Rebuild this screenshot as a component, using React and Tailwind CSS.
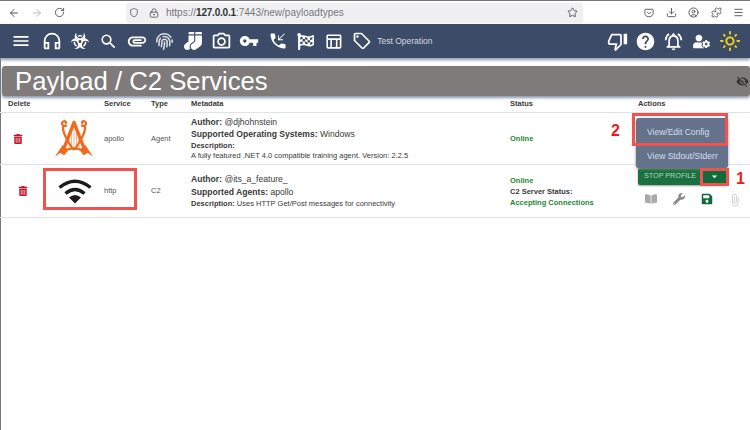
import React from 'react';
import { ArrowLeft, ArrowRight, RotateCw, Shield, LockKeyhole, Star, Download, CircleUser, Puzzle, Menu } from 'lucide-react';
import { FaBiohazard, FaFingerprint, FaSocks, FaFlagCheckered, FaUserCog, FaTrashAlt, FaWrench, FaSave, FaBookOpen } from 'react-icons/fa';
import {
  MdMenu, MdOutlineHeadphones, MdSearch, MdAttachment, MdOutlinePhotoCamera, MdVpnKey, MdPhoneCallback, MdOutlineTableChart,
  MdOutlineLocalOffer, MdOutlineThumbDown, MdHelp, MdOutlineNotificationsActive, MdOutlineLightMode, MdVisibilityOff,
  MdArrowDropDown, MdAttachFile,
} from 'react-icons/md';

const navIcons = [
  { icon: MdOutlineHeadphones, size: 'text-[22px]' },
  { icon: FaBiohazard, size: 'text-[18px]' },
  { icon: MdSearch, size: 'text-[19px]' },
  { icon: MdAttachment, size: 'text-[22px]' },
  { icon: FaFingerprint, size: 'text-[17px] opacity-80' },
  { icon: FaSocks, size: 'text-[18px]' },
  { icon: MdOutlinePhotoCamera, size: 'text-[21px]' },
  { icon: MdVpnKey, size: 'text-[20px]' },
  { icon: MdPhoneCallback, size: 'text-[20px]' },
  { icon: FaFlagCheckered, size: 'text-[17px]' },
  { icon: MdOutlineTableChart, size: 'text-[19px]' },
  { icon: MdOutlineLocalOffer, size: 'text-[20px]' },
];

const NavCell = ({ children, className }) => (
  <div className={`w-[28.2px] flex justify-center items-center text-white ${className || ''}`}>{children}</div>
);

const ApolloLogo = () => (
  <svg viewBox="0 0 38 40" className="w-[38px] h-[39px]" fill="none" stroke="#ee6a1e" strokeLinecap="round" strokeLinejoin="round">
    <path d="M14 15v14M16.5 11v19M19 8v21M21.5 11v19M24 15v14" stroke="#f4b48a" strokeWidth="1" />
    <path d="M19 3.5 L9.5 28 M19 3.5 L28.5 28" strokeWidth="3.4" />
    <path d="M11 7 C7 8 5 4 8 2.5 C10 1.5 11.5 3 10.5 4.5 M8 7 C6 13 13 23 18 31" strokeWidth="2.2" />
    <path d="M27 7 C31 8 33 4 30 2.5 C28 1.5 26.5 3 27.5 4.5 M30 7 C32 13 25 23 20 31" strokeWidth="2.2" />
    <path d="M8 34 Q19 26 30 34" strokeWidth="2.2" />
    <path d="M0.5 37.5 L7.5 27 L13 31.5 L9 37 L5 34.5 Z" fill="#ee6a1e" strokeWidth="0.6" />
    <path d="M37.5 37.5 L30.5 27 L25 31.5 L29 37 L33 34.5 Z" fill="#ee6a1e" strokeWidth="0.6" />
  </svg>
);

const WifiLogo = () => (
  <svg viewBox="0 0 34 26" className="w-[34px] h-[26px]" fill="none" stroke="#1b1b1b" strokeWidth="3.4">
    <path d="M1.5 9.5 Q17 -3 32.5 9.5" />
    <path d="M7.5 15.5 Q17 7.5 26.5 15.5" />
    <path d="M17 25.5 L11 19.5 Q17 14.5 23 19.5 Z" fill="#1b1b1b" stroke="none" />
  </svg>
);

const App = () => {
  return (
    <div className="relative w-[750px] h-[430px] overflow-hidden bg-white text-[#3a3a3a] shadow-[inset_1px_0_0_#777] font-['Liberation_Sans',Arial,sans-serif]">
      <div className="h-[24px] bg-white flex items-center pl-[2px] border-t border-[#777]">
        <div className="flex items-center text-[#555]">
          <div className="w-[23px] flex justify-center"><ArrowLeft className="w-[12px] h-[12px]" /></div>
          <div className="w-[23px] flex justify-center"><ArrowRight className="w-[12px] h-[12px] text-[#bbb]" /></div>
          <div className="w-[23px] flex justify-center"><RotateCw className="w-[11px] h-[11px]" /></div>
        </div>
        <div className="ml-[55px] w-[457px] h-[20px] bg-[#f0f0f2] rounded-[3px] flex items-center pl-[3px] pr-[5px]">
          <Shield className="w-[10px] h-[11px] text-[#555]" />
          <LockKeyhole className="w-[10px] h-[10px] text-[#555] ml-[10px]" />
          <span className="ml-[7px] text-[10px] text-[#777]">https://<span className="text-[#333] font-bold tracking-[-0.2px]">127.0.0.1</span>:7443/new/payloadtypes</span>
          <Star className="w-[11px] h-[11px] text-[#555] ml-auto" />
        </div>
        <div className="ml-auto flex items-center text-[#555]">
          <div className="w-[22.5px] flex justify-center">
            <svg viewBox="0 0 12 12" className="w-[10px] h-[10px]" fill="none" stroke="currentColor" strokeWidth="1.1">
              <path d="M1 2.5Q1 1.5 2 1.5H10Q11 1.5 11 2.5V5.5Q11 10.5 6 10.5Q1 10.5 1 5.5Z" />
              <path d="M3.8 4.8L6 7L8.2 4.8" />
            </svg>
          </div>
          <div className="w-[22.5px] flex justify-center"><Download className="w-[11px] h-[11px]" /></div>
          <div className="w-[22.5px] flex justify-center"><CircleUser className="w-[11px] h-[11px]" /></div>
          <div className="w-[22.5px] flex justify-center"><Puzzle className="w-[11px] h-[11px]" /></div>
          <div className="w-[22.5px] flex justify-center"><Menu className="w-[11px] h-[11px]" /></div>
        </div>
      </div>

      <div className="relative h-[34px] bg-[#3c4c68] flex items-center shadow-[0_2px_3px_#8a97ab]">
        <div className="w-[38px] pl-[4px] flex justify-center text-white text-[20px]"><MdMenu /></div>
        {navIcons.map(({ icon: Icon, size }, i) => (
          <NavCell key={i} className={size}><Icon /></NavCell>
        ))}
        <span className="ml-[1px] text-[8.5px] text-[#d5dae2]">Test Operation</span>
        <div className="ml-auto mr-[6px] flex items-center">
          <NavCell className="text-[21px]"><MdOutlineThumbDown /></NavCell>
          <NavCell className="text-[21px]"><MdHelp /></NavCell>
          <NavCell className="text-[21px]"><MdOutlineNotificationsActive /></NavCell>
          <NavCell className="text-[17px]"><FaUserCog /></NavCell>
          <NavCell className="text-[22px]"><MdOutlineLightMode className="text-[#f2d21b]" /></NavCell>
        </div>
      </div>

      <div className="mt-[8px] ml-[2px] h-[30px] bg-[#807b7b] rounded-[3px] flex items-center pl-[13px] pr-[1px] shadow-[0_2px_3px_#8a97ab]">
        <span className="text-[25.7px] text-white">Payload / C2 Services</span>
        <MdVisibilityOff className="ml-auto text-[13px] text-[#333]" />
      </div>

      <div className="h-[17px] flex items-center text-[7.5px] font-bold border-b border-[#e2e2e2]">
        <span className="w-[104px] pl-[8px]">Delete</span>
        <span className="w-[47px]">Service</span>
        <span className="w-[40px]">Type</span>
        <span className="w-[319px]">Metadata</span>
        <span className="w-[128px]">Status</span>
        <span>Actions</span>
      </div>

      <div className="h-[52px] flex items-center text-[7.5px] border-b border-[#e2e2e2]">
        <div className="w-[104px] flex items-center pl-[13px]">
          <FaTrashAlt className="text-[10px] text-[#c0152f]" />
          <div className="ml-[32px]"><ApolloLogo /></div>
        </div>
        <span className="w-[47px] text-[#555]">apollo</span>
        <span className="w-[40px] text-[#555]">Agent</span>
        <div className="w-[319px]">
          <div className="text-[8.6px] leading-[12px]"><b>Author:</b> @djhohnstein</div>
          <div className="text-[8.6px] leading-[12.5px]"><b>Supported Operating Systems:</b> Windows</div>
          <div className="leading-[11px] font-bold">Description:</div>
          <div className="leading-[10.5px]">A fully featured .NET 4.0 compatible training agent. Version: 2.2.5</div>
        </div>
        <span className="w-[128px] text-[#1d8a2f] font-bold">Online</span>
      </div>

      <div className="h-[53px] flex items-center text-[7.5px] border-b border-[#e2e2e2]">
        <div className="w-[104px] flex items-center pl-[18px]">
          <FaTrashAlt className="text-[10px] text-[#c0152f]" />
          <div className="ml-[30px]"><WifiLogo /></div>
        </div>
        <span className="w-[47px] text-[#555]">http</span>
        <span className="w-[40px] text-[#555]">C2</span>
        <div className="w-[319px]">
          <div className="text-[8.6px] leading-[13px]"><b>Author:</b> @its_a_feature_</div>
          <div className="text-[8.6px] leading-[12px]"><b>Supported Agents:</b> apollo</div>
          <div className="leading-[12px]"><b>Description:</b> Uses HTTP Get/Post messages for connectivity</div>
        </div>
        <div className="w-[128px] font-bold leading-[11px]">
          <div className="text-[#1d8a2f]">Online</div>
          <div>C2 Server Status:</div>
          <div className="text-[#1d8a2f]">Accepting Connections</div>
        </div>
        <div className="flex flex-col self-start mt-[3px]">
          <div className="flex h-[17px] w-[89px] rounded-[2px] bg-[#1a7040] text-[#b5d4bf] text-[7.2px] items-center shadow-[0_1px_2px_#999]">
            <span className="pl-[6px] w-[63px]">STOP PROFILE</span>
            <div className="flex-1 h-full bg-[#0f6b3a] border-l border-[#0b5a30] flex items-center justify-center text-white text-[13px]"><MdArrowDropDown /></div>
          </div>
          <div className="flex mt-[8px] -ml-[1px] text-[12px]">
            <div className="w-[28px] flex justify-center text-[#aaa]"><FaBookOpen /></div>
            <div className="w-[28px] flex justify-center text-[#888]"><FaWrench /></div>
            <div className="w-[28px] flex justify-center text-[#0f6b3a]"><FaSave /></div>
            <div className="w-[28px] flex justify-center text-[#ccc] text-[14px]"><MdAttachFile /></div>
          </div>
        </div>
      </div>

      {/* dropdown menu over the actions cell */}
      <div className="absolute left-[636px] top-[118px] w-[92px] h-[50px] bg-[#64728c] rounded-[3px] text-[#d8dee8] text-[8.5px] shadow-[0_1px_3px_#888] flex flex-col">
        <div className="h-[28px] pl-[11px] flex items-center">View/Edit Config</div>
        <div className="h-[21px] pl-[11px] flex items-center">View Stdout/Stderr</div>
      </div>

      {/* red annotations */}
      <div className="absolute left-[43px] top-[168px] w-[94px] h-[42px] border-[3px] border-[#f0524f]" />
      <div className="absolute left-[632px] top-[113px] w-[96px] h-[33px] border-[3px] border-[#f0524f]" />
      <div className="absolute left-[700px] top-[168px] w-[29px] h-[18px] border-[3px] border-[#f0524f]" />
      <span className="absolute left-[611px] top-[119px] text-[16px] font-bold text-[#e51c23]">2</span>
      <span className="absolute left-[736px] top-[167px] text-[16px] font-bold text-[#e51c23]">1</span>
    </div>
  );
};

export default App;
